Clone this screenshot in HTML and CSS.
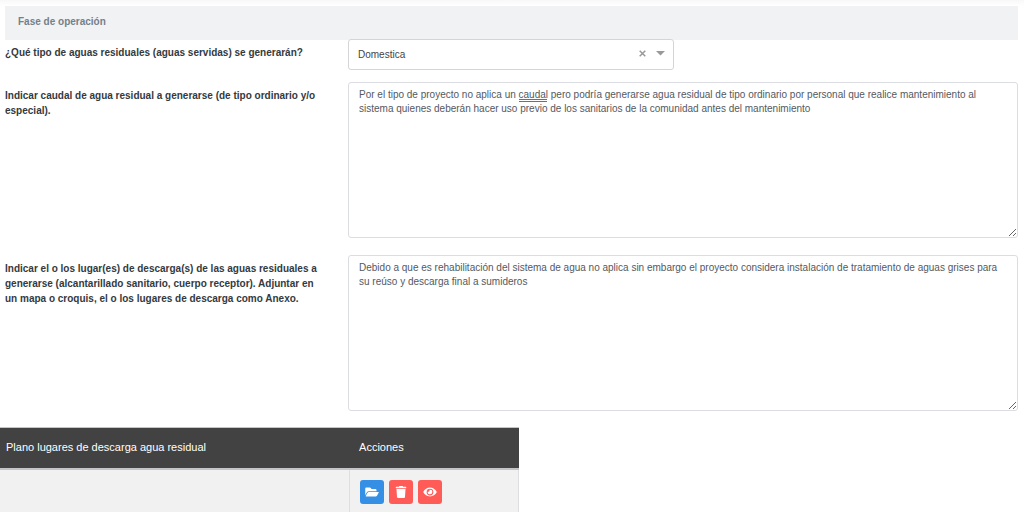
FILE: index.html
```html
<!DOCTYPE html>
<html lang="es">
<head>
<meta charset="utf-8">
<meta name="viewport" content="width=device-width, initial-scale=1">
<title>Fase de operación</title>
<link rel="stylesheet" href="styles.css">
</head>
<body>
<main class="page">
  <form class="form">
    <h2 class="section-title">Fase de operación</h2>
    <div class="row">
      <label class="label" for="tipo">¿Qué tipo de aguas residuales (aguas servidas) se generarán?</label>
      <div class="picker">
        <select class="select" id="tipo"><option>Domestica</option></select>
        <button class="clear" type="button" aria-label="Quitar">
          <svg width="7" height="7" viewBox="0 0 7 7"><path d="M.7.7l5.6 5.6M6.3.7L.7 6.3" stroke="#999" stroke-width="1.5"/></svg>
        </button>
        <svg class="arrow" width="9" height="5" viewBox="0 0 9 5"><path d="M0 0h9L4.500 4.500z" fill="#999"/></svg>
      </div>
    </div>
    <div class="row">
      <label class="label" for="caudal">Indicar caudal de agua residual a generarse (de tipo ordinario y/o especial).</label>
      <div class="box">
        <textarea class="textarea" id="caudal" spellcheck="false">Por el tipo de proyecto no aplica un caudal pero podría generarse agua residual de tipo ordinario por personal que realice mantenimiento al sistema quienes deberán hacer uso previo de los sanitarios de la comunidad antes del mantenimiento</textarea>
        <span class="grammar-mark"></span>
      </div>
    </div>
    <div class="row">
      <label class="label" for="lugares">Indicar el o los lugar(es) de descarga(s) de las aguas residuales a generarse (alcantarillado sanitario, cuerpo receptor). Adjuntar en un mapa o croquis, el o los lugares de descarga como Anexo.</label>
      <div class="box">
        <textarea class="textarea" id="lugares" spellcheck="false">Debido a que es rehabilitación del sistema de agua no aplica sin embargo el proyecto considera instalación de tratamiento de aguas grises para su reúso y descarga final a sumideros</textarea>
      </div>
    </div>
  </form>
  <table class="table">
    <thead>
      <tr><th class="col-plan">Plano lugares de descarga agua residual</th><th>Acciones</th></tr>
    </thead>
    <tbody>
      <tr>
        <td></td>
        <td>
          <div class="actions">
            <button class="action open" type="button" aria-label="Abrir">
              <svg width="14" height="12" viewBox="0 0 576 512"><path fill="#fff" d="M572.700 292.100L500.300 416.200A64 64 0 0 1 445 448H45c-18.500 0-30.100-20.100-20.700-36.100l72.400-124.200A64 64 0 0 1 152 256h400c18.500 0 30.100 20.100 20.700 36.100zM152 224h328v-48c0-26.500-21.500-48-48-48H272l-64-64H48C21.500 64 0 85.500 0 112v278l69.100-118.500C86.200 242.200 118 224 152 224z"/></svg>
            </button>
            <button class="action danger" type="button" aria-label="Eliminar">
              <svg width="12" height="12" viewBox="0 0 448 512"><path fill="#fff" d="M432 32H312l-9.400-18.700A24 24 0 0 0 281 0H167a24 24 0 0 0-21.500 13.300L136 32H16A16 16 0 0 0 0 48v32a16 16 0 0 0 16 16h416a16 16 0 0 0 16-16V48a16 16 0 0 0-16-16zM32 128l21 339a48 48 0 0 0 48 45h246a48 48 0 0 0 48-45l21-339z"/></svg>
            </button>
            <button class="action danger" type="button" aria-label="Ver">
              <svg width="14" height="12" viewBox="0 0 576 512"><path fill="#fff" fill-rule="evenodd" d="M572.500 241.400C518 135 410.900 64 288 64S58 135 3.500 241.400a32 32 0 0 0 0 29.200C58 377 165 448 288 448s230-71 284.500-177.400a32 32 0 0 0 0-29.200zM288 400a144 144 0 1 1 0-288 144 144 0 0 1 0 288zM288 160a95 95 0 0 0-25 4 48 48 0 0 1-67 67 96 96 0 1 0 92-71z"/></svg>
            </button>
          </div>
        </td>
      </tr>
    </tbody>
  </table>
</main>
</body>
</html>
```
FILE: styles.css
```css
* { box-sizing: border-box; }

body {
  margin: 0;
  background: #fff;
  color: #333a40;
  font-family: "Liberation Sans", Arial, sans-serif;
  font-size: 10px;
}

.page {
  padding-top: 6px;
  background: linear-gradient(#f8f8f8, #fff 6px);
}

.form {
  display: flex;
  flex-direction: column;
  padding: 0 6px 0 5px;
}

.section-title {
  margin: 0;
  padding: 8px 13px 10px;
  background: #f1f2f4;
  color: #74808a;
  font-size: 10px;
  line-height: 16px;
}

.row {
  display: grid;
  grid-template-columns: 343fr 670fr;
  margin-bottom: 17px;
}

.section-title + .row { margin: -1px 0 12px; }

.row:last-child { margin-bottom: 16px; }

.label {
  padding: 6px 24px 0 0;
  font-weight: bold;
  line-height: 15px;
}

.picker {
  position: relative;
  width: 48.7%;
}

.select {
  display: block;
  width: 100%;
  height: 31px;
  padding: 0 48px 0 9px;
  appearance: none;
  border: 1px solid #d5d5d7;
  border-radius: 3px;
  background: #fff;
  color: #444;
  font: inherit;
}

.clear {
  position: absolute;
  top: 8px;
  right: 24px;
  display: flex;
  align-items: center;
  justify-content: center;
  width: 15px;
  height: 13px;
  padding: 0;
  border: 0;
  background: none;
}

.arrow {
  position: absolute;
  top: 12px;
  right: 9px;
  pointer-events: none;
}

.box { position: relative; }

.textarea {
  display: block;
  width: 100%;
  height: 156px;
  padding: 5px 10px;
  resize: vertical;
  border: 1px solid #dcdde2;
  border-radius: 3px;
  background: #fff;
  color: #54595f;
  font: inherit;
  line-height: 14px;
}

.grammar-mark {
  position: absolute;
  top: 17px;
  left: 171px;
  width: 28px;
  height: 3px;
  border-top: 1px solid #5068ee;
  border-bottom: 1px solid #5068ee;
  pointer-events: none;
}

.table {
  width: 50.7%;
  table-layout: fixed;
  border-collapse: collapse;
  font-size: 11px;
}

.table th {
  height: 41px;
  padding: 0 10px 1px;
  border-top: 1px solid #c4c4c8;
  border-bottom: 2px solid #c4c4c8;
  background: #424242;
  color: #fff;
  font-weight: normal;
  text-align: left;
}

.table .col-plan {
  width: 67.3%;
  padding-left: 6px;
}

.table td {
  padding: 10px 10px 8px;
  border-right: 1px solid #dedee2;
  background: #f1f1f1;
}

.actions {
  display: flex;
  gap: 5px;
}

.action {
  display: flex;
  align-items: center;
  justify-content: center;
  width: 24px;
  height: 24px;
  padding: 0;
  border: 0;
  border-radius: 3px;
}

.open { background: #358fe4; }

.danger { background: #ff5b57; }
```
